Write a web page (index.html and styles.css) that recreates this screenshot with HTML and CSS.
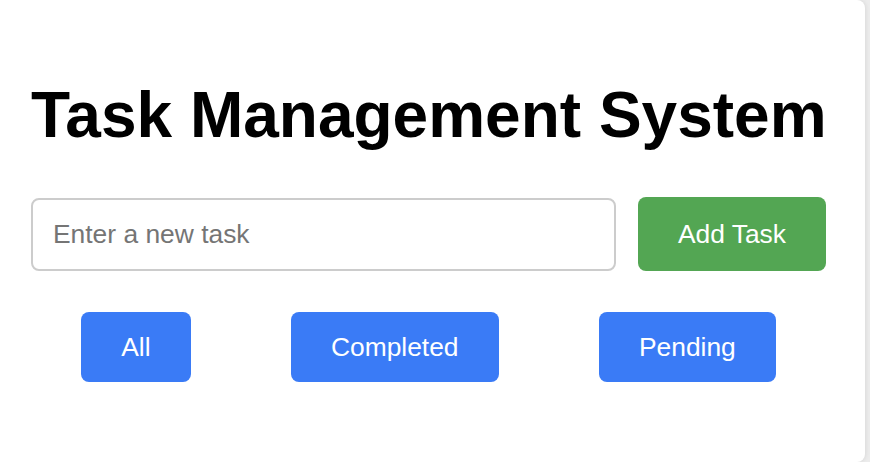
FILE: index.html
```html
<!DOCTYPE html>
<html lang="en">
<head>
<meta charset="utf-8">
<title>Task Management System</title>
<link rel="stylesheet" href="styles.css">
</head>
<body>
<div class="page">
  <main class="card">
    <h1 class="title">Task Management System</h1>
    <div class="add-row">
      <input class="task-input" type="text" placeholder="Enter a new task">
      <button class="add-btn">Add Task</button>
    </div>
    <div class="filters">
      <button class="filter-btn">All</button>
      <button class="filter-btn">Completed</button>
      <button class="filter-btn">Pending</button>
    </div>
  </main>
</div>
</body>
</html>
```

FILE: styles.css
```css
html, body {
  margin: 0;
  padding: 0;
  height: 100%;
}
body {
  background: #ececec;
  font-family: "Liberation Sans", Arial, sans-serif;
  overflow: hidden;
}
.page {
  display: flex;
  height: 462px;
}
.card {
  box-sizing: border-box;
  width: 865px;
  height: 462px;
  background: #ffffff;
  border-radius: 0 8px 8px 0;
  box-shadow: 1px 0 4px rgba(0, 0, 0, 0.08);
  padding: 79px 39px 0 31px;
}
.title {
  margin: 0;
  font-size: 64px;
  font-weight: bold;
  color: #000;
  line-height: 72px;
  white-space: nowrap;
}
.add-row {
  display: flex;
  align-items: center;
  gap: 22px;
  margin-top: 46px;
}
.task-input {
  flex: 1;
  min-width: 0;
  box-sizing: border-box;
  height: 73px;
  border: 2px solid #cccccc;
  border-radius: 8px;
  padding: 0 20px;
  font-family: "Liberation Sans", Arial, sans-serif;
  font-size: 26.4px;
  color: #333;
  outline: none;
}
.task-input::placeholder {
  color: #757575;
}
.add-btn {
  box-sizing: border-box;
  height: 74px;
  padding: 0 40px;
  border: none;
  border-radius: 8px;
  background: #53a653;
  color: #fff;
  font-family: "Liberation Sans", Arial, sans-serif;
  font-size: 26.4px;
}
.filters {
  display: flex;
  justify-content: space-around;
  margin-top: 41px;
}
.filter-btn {
  box-sizing: border-box;
  height: 70px;
  padding: 0 40px;
  border: none;
  border-radius: 8px;
  background: #3a7bf6;
  color: #fff;
  font-family: "Liberation Sans", Arial, sans-serif;
  font-size: 26.4px;
}
```
